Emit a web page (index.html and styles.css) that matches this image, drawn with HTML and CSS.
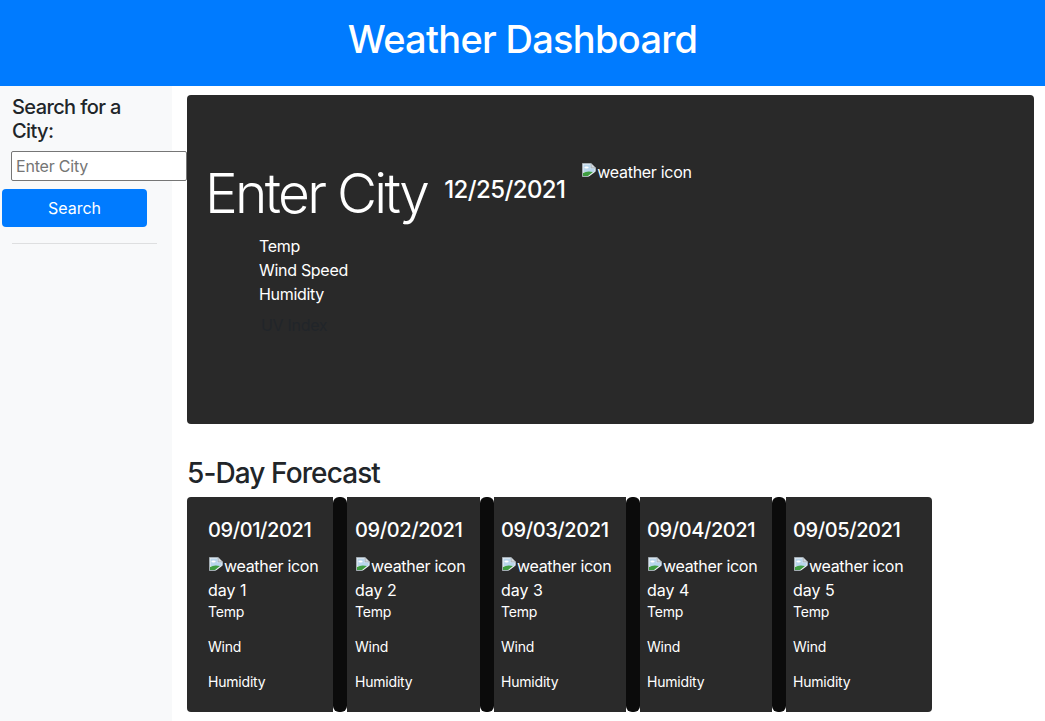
FILE: index.html
```html
<!DOCTYPE html>
<html lang="en">
<head>
<meta charset="utf-8">
<title>Weather Dashboard</title>
<link rel="stylesheet" href="styles.css">
</head>
<body>
<header class="top">
  <h1 class="top-title">Weather Dashboard</h1>
</header>
<div class="layout">
  <aside class="sidebar">
    <h5 class="side-title">Search for a City:</h5>
    <input class="city-input" type="text" placeholder="Enter City">
    <button class="search-btn">Search</button>
    <hr class="side-rule">
  </aside>
  <main class="main">
    <section class="current">
      <div class="current-head">
        <h1 class="city-name">Enter City</h1>
        <h4 class="city-date">12/25/2021</h4>
        <span class="broken-img head-icon"><svg class="bi" viewBox="0 0 16 16" width="16" height="16"><path d="M1.5 1.5H10L14.5 6V14.5H1.5Z" fill="#eef1f3" stroke="#a3acb3"/><path d="M10 1.5V6H14.5" fill="#d5dade" stroke="#a3acb3"/><path d="M2.5 2.5H9.5V6.5H13.5V10L2.5 10Z" fill="#b9d6ec"/><ellipse cx="5.5" cy="5.5" rx="2.2" ry="1.1" fill="#fff"/><path d="M2 14L2 11Q6 8.5 12 10L7 14Z" fill="#3f9d42"/><path d="M6 16L16 8.5V16Z" fill="#292929"/></svg>weather icon</span>
      </div>
      <div class="current-stats">
        <p class="stat">Temp</p>
        <p class="stat">Wind Speed</p>
        <p class="stat">Humidity</p>
        <p class="stat uv">UV Index</p>
      </div>
    </section>
    <h3 class="fc-title">5-Day Forecast</h3>
    <div class="forecast">
      <div class="fc-card fc-first">
        <h5 class="fc-date">09/01/2021</h5>
        <span class="broken-img"><svg class="bi" viewBox="0 0 16 16" width="16" height="16"><path d="M1.5 1.5H10L14.5 6V14.5H1.5Z" fill="#eef1f3" stroke="#a3acb3"/><path d="M10 1.5V6H14.5" fill="#d5dade" stroke="#a3acb3"/><path d="M2.5 2.5H9.5V6.5H13.5V10L2.5 10Z" fill="#b9d6ec"/><ellipse cx="5.5" cy="5.5" rx="2.2" ry="1.1" fill="#fff"/><path d="M2 14L2 11Q6 8.5 12 10L7 14Z" fill="#3f9d42"/><path d="M6 16L16 8.5V16Z" fill="#2a2a2a"/></svg>weather icon</span>
        <div class="fc-day">day 1</div>
        <p class="fc-stat">Temp</p>
        <p class="fc-stat">Wind</p>
        <p class="fc-stat">Humidity</p>
      </div>
      <div class="fc-strip"></div>
      <div class="fc-card fc-w133">
        <h5 class="fc-date">09/02/2021</h5>
        <span class="broken-img"><svg class="bi" viewBox="0 0 16 16" width="16" height="16"><path d="M1.5 1.5H10L14.5 6V14.5H1.5Z" fill="#eef1f3" stroke="#a3acb3"/><path d="M10 1.5V6H14.5" fill="#d5dade" stroke="#a3acb3"/><path d="M2.5 2.5H9.5V6.5H13.5V10L2.5 10Z" fill="#b9d6ec"/><ellipse cx="5.5" cy="5.5" rx="2.2" ry="1.1" fill="#fff"/><path d="M2 14L2 11Q6 8.5 12 10L7 14Z" fill="#3f9d42"/><path d="M6 16L16 8.5V16Z" fill="#2a2a2a"/></svg>weather icon</span>
        <div class="fc-day">day 2</div>
        <p class="fc-stat">Temp</p>
        <p class="fc-stat">Wind</p>
        <p class="fc-stat">Humidity</p>
      </div>
      <div class="fc-strip"></div>
      <div class="fc-card fc-w132">
        <h5 class="fc-date">09/03/2021</h5>
        <span class="broken-img"><svg class="bi" viewBox="0 0 16 16" width="16" height="16"><path d="M1.5 1.5H10L14.5 6V14.5H1.5Z" fill="#eef1f3" stroke="#a3acb3"/><path d="M10 1.5V6H14.5" fill="#d5dade" stroke="#a3acb3"/><path d="M2.5 2.5H9.5V6.5H13.5V10L2.5 10Z" fill="#b9d6ec"/><ellipse cx="5.5" cy="5.5" rx="2.2" ry="1.1" fill="#fff"/><path d="M2 14L2 11Q6 8.5 12 10L7 14Z" fill="#3f9d42"/><path d="M6 16L16 8.5V16Z" fill="#2a2a2a"/></svg>weather icon</span>
        <div class="fc-day">day 3</div>
        <p class="fc-stat">Temp</p>
        <p class="fc-stat">Wind</p>
        <p class="fc-stat">Humidity</p>
      </div>
      <div class="fc-strip"></div>
      <div class="fc-card fc-w132">
        <h5 class="fc-date">09/04/2021</h5>
        <span class="broken-img"><svg class="bi" viewBox="0 0 16 16" width="16" height="16"><path d="M1.5 1.5H10L14.5 6V14.5H1.5Z" fill="#eef1f3" stroke="#a3acb3"/><path d="M10 1.5V6H14.5" fill="#d5dade" stroke="#a3acb3"/><path d="M2.5 2.5H9.5V6.5H13.5V10L2.5 10Z" fill="#b9d6ec"/><ellipse cx="5.5" cy="5.5" rx="2.2" ry="1.1" fill="#fff"/><path d="M2 14L2 11Q6 8.5 12 10L7 14Z" fill="#3f9d42"/><path d="M6 16L16 8.5V16Z" fill="#2a2a2a"/></svg>weather icon</span>
        <div class="fc-day">day 4</div>
        <p class="fc-stat">Temp</p>
        <p class="fc-stat">Wind</p>
        <p class="fc-stat">Humidity</p>
      </div>
      <div class="fc-strip"></div>
      <div class="fc-card fc-last">
        <h5 class="fc-date">09/05/2021</h5>
        <span class="broken-img"><svg class="bi" viewBox="0 0 16 16" width="16" height="16"><path d="M1.5 1.5H10L14.5 6V14.5H1.5Z" fill="#eef1f3" stroke="#a3acb3"/><path d="M10 1.5V6H14.5" fill="#d5dade" stroke="#a3acb3"/><path d="M2.5 2.5H9.5V6.5H13.5V10L2.5 10Z" fill="#b9d6ec"/><ellipse cx="5.5" cy="5.5" rx="2.2" ry="1.1" fill="#fff"/><path d="M2 14L2 11Q6 8.5 12 10L7 14Z" fill="#3f9d42"/><path d="M6 16L16 8.5V16Z" fill="#2a2a2a"/></svg>weather icon</span>
        <div class="fc-day">day 5</div>
        <p class="fc-stat">Temp</p>
        <p class="fc-stat">Wind</p>
        <p class="fc-stat">Humidity</p>
      </div>
    </div>
  </main>
</div>
</body>
</html>
```
FILE: styles.css
```css
* { box-sizing: border-box; }
html, body { height: 100%; }
body {
  margin: 0;
  font-family: Inter, "Liberation Sans", Arial, sans-serif;
  font-size: 16px;
  line-height: 1.5;
  color: #212529;
  background: #fff;
  overflow: hidden;
}
h1, h3, h4, h5, p { margin: 0; }

.top {
  height: 86px;
  background: #007bff;
  display: flex;
  justify-content: center;
  padding-top: 15px;
}
.top-title {
  color: #fff;
  font-size: 38px;
  font-weight: 500;
  line-height: 48px;
  letter-spacing: -0.7px;
}

.layout {
  display: flex;
  height: calc(100% - 86px);
}
.sidebar {
  width: 172px;
  flex: none;
  background: #f8f9fa;
  padding: 9px 0 0 0;
  display: flex;
  flex-direction: column;
  align-items: flex-start;
  position: relative;
  z-index: 1;
}
.side-title {
  font-size: 20px;
  font-weight: 500;
  line-height: 24px;
  margin: 0 0 8px 12px;
  width: 140px;
  letter-spacing: -0.6px;
}
.city-input {
  margin: 0 0 8px 11px;
  width: 176px;
  height: 30px;
  border: 1px solid #767676;
  border-radius: 2px;
  padding: 1px 4px;
  font-family: inherit;
  font-size: 16px;
  letter-spacing: -0.2px;
  background: #fff;
  color: #212529;
}
.city-input::placeholder { color: #757575; }
.search-btn {
  margin-left: 2px;
  width: 145px;
  height: 38px;
  border: 0;
  border-radius: 4px;
  background: #007bff;
  color: #fff;
  font-family: inherit;
  font-size: 16px;
  line-height: 24px;
}
.side-rule {
  margin: 16px 0 0 12px;
  width: 145px;
  border: 0;
  border-top: 1px solid rgba(0,0,0,0.1);
}

.main {
  flex: 1;
  padding: 9px 11px 0 15px;
}
.current {
  height: 329px;
  background: #292929;
  border-radius: 4px;
  padding: 0 18px;
  color: #fff;
}
.current-head {
  display: flex;
  align-items: flex-start;
}
.city-name {
  font-size: 55px;
  font-weight: 300;
  line-height: 67px;
  margin-top: 65px;
  letter-spacing: -2.7px;
}
.city-date {
  font-size: 24px;
  font-weight: 500;
  line-height: 29px;
  margin: 80px 0 0 17px;
  letter-spacing: -0.6px;
}
.broken-img {
  display: inline-flex;
  align-items: flex-start;
  font-size: 16px;
  line-height: 20px;
  white-space: nowrap;
  letter-spacing: -0.3px;
}
.head-icon { margin: 67px 0 0 16px; }
.bi { flex: none; margin-top: 0; }
.current-stats {
  margin: 7px 0 0 54px;
}
.stat {
  font-size: 16px;
  line-height: 24px;
  letter-spacing: -0.3px;
}
.stat.uv {
  margin: 7px 0 0 2px;
  color: #212529;
}

.fc-title {
  font-size: 28px;
  font-weight: 500;
  line-height: 34px;
  margin: 32px 0 7px;
  letter-spacing: -0.9px;
}
.forecast {
  display: flex;
  height: 215px;
  width: 745px;
}
.fc-card {
  background: #2a2a2a;
  color: #fff;
  padding: 21px 0 0 7px;
  display: flex;
  flex-direction: column;
  align-items: flex-start;
  white-space: nowrap;
}
.fc-first { width: 146px; padding-left: 21px; border-radius: 4px 0 0 4px; }
.fc-w133 { width: 133px; padding-left: 8px; }
.fc-w132 { width: 132px; }
.fc-last { width: 146px; border-radius: 0 4px 4px 0; }
.fc-strip {
  width: 14px;
  flex: none;
  background: #0b0b0b;
  border-radius: 6px;
}
.fc-date {
  font-size: 20px;
  font-weight: 500;
  line-height: 24px;
  margin-bottom: 12px;
  letter-spacing: -0.4px;
}
.fc-card .broken-img { line-height: 24px; }
.fc-card .bi { margin-top: 2px; }
.fc-day {
  font-size: 16px;
  line-height: 24px;
}
.fc-stat {
  font-size: 14px;
  line-height: 20px;
  margin: 0 0 15px;
  letter-spacing: -0.2px;
}
```
